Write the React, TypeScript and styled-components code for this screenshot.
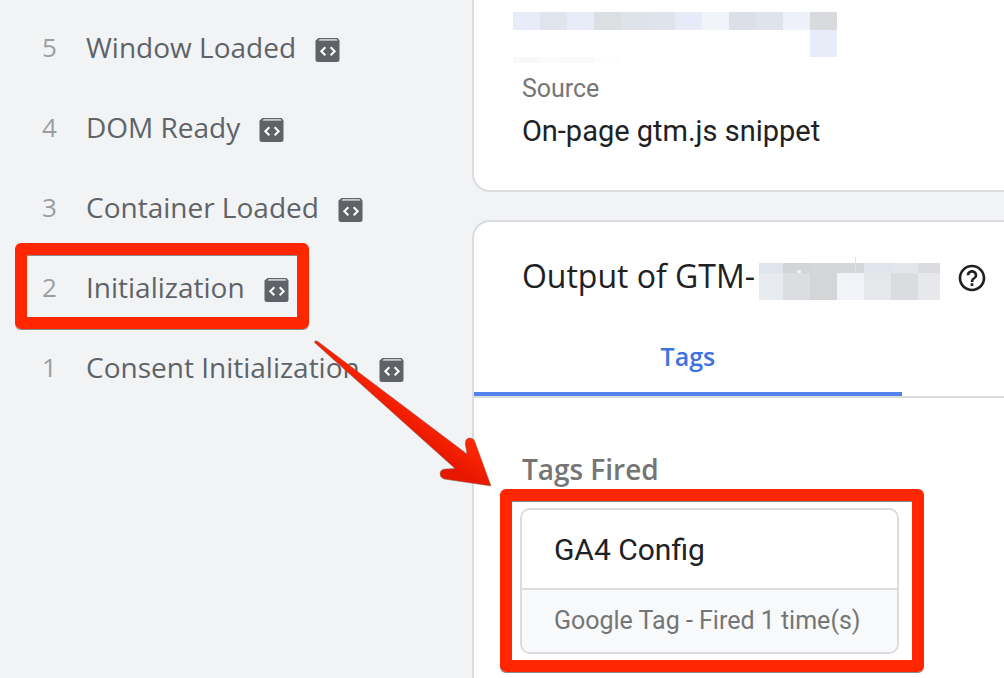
import React from "react";
import styled, { createGlobalStyle } from "styled-components";
import { MdHelpOutline } from "react-icons/md";

const GlobalStyle = createGlobalStyle`
  *, *::before, *::after { box-sizing: border-box; }
  body {
    margin: 0;
    background: #f1f3f5;
    font-family: Roboto, "Liberation Sans", sans-serif;
    color: #202124;
  }
  h2, h3, p, ol, dl, dd { margin: 0; padding: 0; font-weight: 400; }
`;

const display = `"Open Sans", "Noto Sans", sans-serif`;
const red = "#ff2600";

const Page = styled.div`
  position: relative;
  display: flex;
  min-height: 100vh;
  overflow: hidden;
`;

const Sidebar = styled.nav`
  flex: 0 0 47%;
  padding-top: 8px;
`;

const EventList = styled.ol`
  list-style: none;
`;

const EventRow = styled.li`
  position: relative;
  display: flex;
  height: 80px;
  padding-left: 42px;
`;

const EventButton = styled.button`
  display: flex;
  align-items: center;
  height: 80px;
  padding: 0 0 2px;
  border: 0;
  background: none;
  font-family: ${display};
  font-size: 28px;
  line-height: 32px;
  color: #5f6368;
  white-space: nowrap;
  cursor: pointer;
`;

const EventNumber = styled.span`
  width: 44px;
  text-align: left;
  font-size: 26px;
  color: #9b9ea2;
`;

const EventIcon = styled.svg`
  width: 26px;
  height: 26px;
  margin-left: 19px;
  margin-top: 6px;
`;

const Highlight = styled.span<{ $inset: string }>`
  position: absolute;
  inset: ${(p) => p.$inset};
  border: 12px solid ${red};
  border-radius: 6px;
  box-shadow: 0 1px 0 #8a8a8a;
  pointer-events: none;

  &::after {
    content: "";
    position: absolute;
    inset: 0;
    border-top: 1px solid #8a8a8a;
  }
`;

const EventHighlight = styled(Highlight)`
  width: 294px;
`;

const Main = styled.main`
  flex: 1;
  min-width: 0;
  display: flex;
  flex-direction: column;
  gap: 28px;
`;

const Card = styled.section<{ $position: "first" | "last" }>`
  border: 2px solid #dadce0;
  border-right: 0;
  border-top-width: ${(p) => (p.$position === "first" ? 0 : 2)}px;
  border-bottom-width: ${(p) => (p.$position === "last" ? 0 : 2)}px;
  border-radius: ${(p) => (p.$position === "first" ? "0 0 0 18px" : "18px 0 0 0")};
  background: #fff;
  flex-grow: ${(p) => (p.$position === "last" ? 1 : 0)};
`;

const SourceHeader = styled.div`
  padding: 12px 0 0 39px;

  svg { display: block; }
`;

const Details = styled.dl`
  padding: 10px 48px 43px;
`;

const DetailLabel = styled.dt`
  font-size: 25px;
  line-height: 32px;
  color: #757575;
`;

const DetailValue = styled.dd`
  padding-top: 10px;
  font-size: 29px;
  line-height: 32px;
`;

const CardHeader = styled.header`
  display: flex;
  align-items: center;
  padding: 30px 0 0 48px;
`;

const CardTitle = styled.h2`
  display: flex;
  align-items: center;
  gap: 4px;
  font-family: ${display};
  font-size: 32px;
  line-height: 40px;
  white-space: nowrap;

  svg { margin-top: 5px; }
`;

const HelpButton = styled.button`
  display: flex;
  margin-left: 16px;
  padding: 4px 0 0;
  border: 0;
  background: none;
  color: #202124;
  cursor: pointer;
`;

const TabBar = styled.div`
  display: flex;
  margin-top: 19px;
  border-bottom: 2px solid #dadce0;
`;

const Tab = styled.button`
  width: 428px;
  height: 77px;
  padding: 0;
  border: 0;
  border-bottom: 4px solid #5383ec;
  background: none;
  font-family: ${display};
  font-size: 25px;
  font-weight: 600;
  color: #3c73e0;
  cursor: pointer;
`;

const TabPanel = styled.div`
  padding: 55px 48px 22px 46px;
`;

const GroupTitle = styled.h3`
  padding-left: 2px;
  font-family: ${display};
  font-size: 28px;
  font-weight: 600;
  line-height: 32px;
  color: #757575;
`;

const TagFrame = styled.div`
  position: relative;
  width: 379px;
  margin-top: 23px;
`;

const TagCard = styled.a`
  display: block;
  overflow: hidden;
  border: 2px solid #dadce0;
  border-radius: 10px;
  color: #202124;
  text-decoration: none;
`;

const TagName = styled.div`
  padding: 21px 32px 19px;
  font-size: 30px;
  line-height: 38px;
`;

const TagMeta = styled.div`
  padding: 15px 32px;
  border-top: 2px solid #dadce0;
  background: #f8f9fb;
  font-size: 25px;
  line-height: 32px;
  color: #757575;
  white-space: nowrap;
`;

const ArrowOverlay = styled.svg`
  position: absolute;
  left: 310px;
  top: 335px;
  pointer-events: none;
`;

const CodeTagIcon = () => (
  <EventIcon viewBox="0 0 26 26" aria-hidden="true">
    <path d="M3.500 1h19l2 2.500v19a2.500 2.500 0 0 1-2.500 2.500h-19a2.500 2.500 0 0 1-2.500-2.500v-19z" fill="#5f6368" />
    <path d="M4.500 2h17l1 1.800h-19z" fill="#c8cacd" />
    <path d="M10.300 10.200l-4 4 4 4M15.700 10.200l4 4-4 4" fill="none" stroke="#fff" strokeWidth="2" />
  </EventIcon>
);

const sourceCells = [
  "#e8ecf8", "#e0e4ed", "#e8ecf8", "#dcdfe2", "#dee2e9", "#dfe3ec",
  "#e7ebf9", "#f0f4f9", "#dcdfe8", "#dfe3ec", "#eef1fa", "#d9dadd",
];

const RedactedSource = () => (
  <svg width="324" height="51" shapeRendering="crispEdges" aria-hidden="true">
    {sourceCells.map((fill, i) => (
      <rect key={i} x={i * 27} y="0" width="27" height="18" fill={fill} />
    ))}
    <rect x="297" y="18" width="27" height="27" fill="#e8ecf8" />
    <rect x="0" y="45" width="27" height="6" fill="#f8f8f9" />
    <rect x="27" y="45" width="27" height="6" fill="#fbfbfc" />
    <rect x="54" y="45" width="27" height="6" fill="#f8f9fa" />
    <rect x="81" y="45" width="27" height="6" fill="#fdfdfd" />
  </svg>
);

const idCells = [
  { x: 0, w: 24, top: "#e0e4ed", bottom: "#e7eaef" },
  { x: 24, w: 27, top: "#d3d4d5", bottom: "#dcdde1" },
  { x: 51, w: 27, top: "#d5d6d8", bottom: "#d4d5d6" },
  { x: 78, w: 27, top: "#d5d6d8", bottom: "#f1f3f8" },
  { x: 105, w: 27, top: "#e0e4ed", bottom: "#e5e7eb" },
  { x: 132, w: 27, top: "#e3e6ed", bottom: "#dadce0" },
  { x: 159, w: 22, top: "#dadce0", bottom: "#e6e8eb" },
];

const RedactedId = () => (
  <svg width="181" height="43" shapeRendering="crispEdges" aria-hidden="true">
    {idCells.map((c) => (
      <g key={c.x}>
        <rect x={c.x} y="6" width={c.w} height="10" fill={c.top} />
        <rect x={c.x} y="16" width={c.w} height="27" fill={c.bottom} />
      </g>
    ))}
    <rect x="38" y="13" width="4" height="3" fill="#eef0f5" />
    <rect x="96" y="0" width="1" height="16" fill="#e0e1e4" />
  </svg>
);

const events = [
  { number: 5, name: "Window Loaded" },
  { number: 4, name: "DOM Ready" },
  { number: 3, name: "Container Loaded" },
  { number: 2, name: "Initialization", highlighted: true },
  { number: 1, name: "Consent Initialization" },
];

export default function App() {
  return (
    <Page>
      <GlobalStyle />
      <Sidebar aria-label="Events">
        <EventList>
          {events.map((e) => (
            <EventRow key={e.number}>
              <EventButton type="button">
                <EventNumber>{e.number}</EventNumber>
                {e.name}
                <CodeTagIcon />
              </EventButton>
              {e.highlighted && <EventHighlight $inset="-5px auto -1px 15px" />}
            </EventRow>
          ))}
        </EventList>
      </Sidebar>

      <Main>
        <Card $position="first">
          <SourceHeader>
            <RedactedSource />
          </SourceHeader>
          <Details>
            <DetailLabel>Source</DetailLabel>
            <DetailValue>On-page gtm.js snippet</DetailValue>
          </Details>
        </Card>

        <Card $position="last">
          <CardHeader>
            <CardTitle>
              Output of GTM-
              <RedactedId />
            </CardTitle>
            <HelpButton type="button" aria-label="Help">
              <MdHelpOutline size={32} />
            </HelpButton>
          </CardHeader>
          <TabBar role="tablist">
            <Tab type="button" role="tab" aria-selected="true">Tags</Tab>
          </TabBar>
          <TabPanel role="tabpanel">
            <GroupTitle>Tags Fired</GroupTitle>
            <TagFrame>
              <TagCard href="#ga4-config">
                <TagName>GA4 Config</TagName>
                <TagMeta>Google Tag - Fired 1 time(s)</TagMeta>
              </TagCard>
              <Highlight $inset="-19px -25px -18px -20px" />
            </TagFrame>
          </TabPanel>
        </Card>
      </Main>

      <ArrowOverlay width="190" height="160" viewBox="310 335 190 160" aria-hidden="true">
        <defs>
          <linearGradient id="shaft" gradientUnits="userSpaceOnUse" x1="400" y1="426" x2="416" y2="404">
            <stop offset="0" stopColor="#e81800" />
            <stop offset="1" stopColor="#ff2600" />
          </linearGradient>
        </defs>
        <path
          d="M314.500 342.500Q314.500 340 317.500 341.200L467 454L465.300 444Q465 438.500 469.500 438Q473.500 437.800 475 442L491 486L444 479Q440 477.500 440 473.500Q440.500 469 446 469L455 468.500Z"
          fill="url(#shaft)"
          stroke="#7d6660"
          strokeWidth="0.500"
        />
      </ArrowOverlay>
    </Page>
  );
}
